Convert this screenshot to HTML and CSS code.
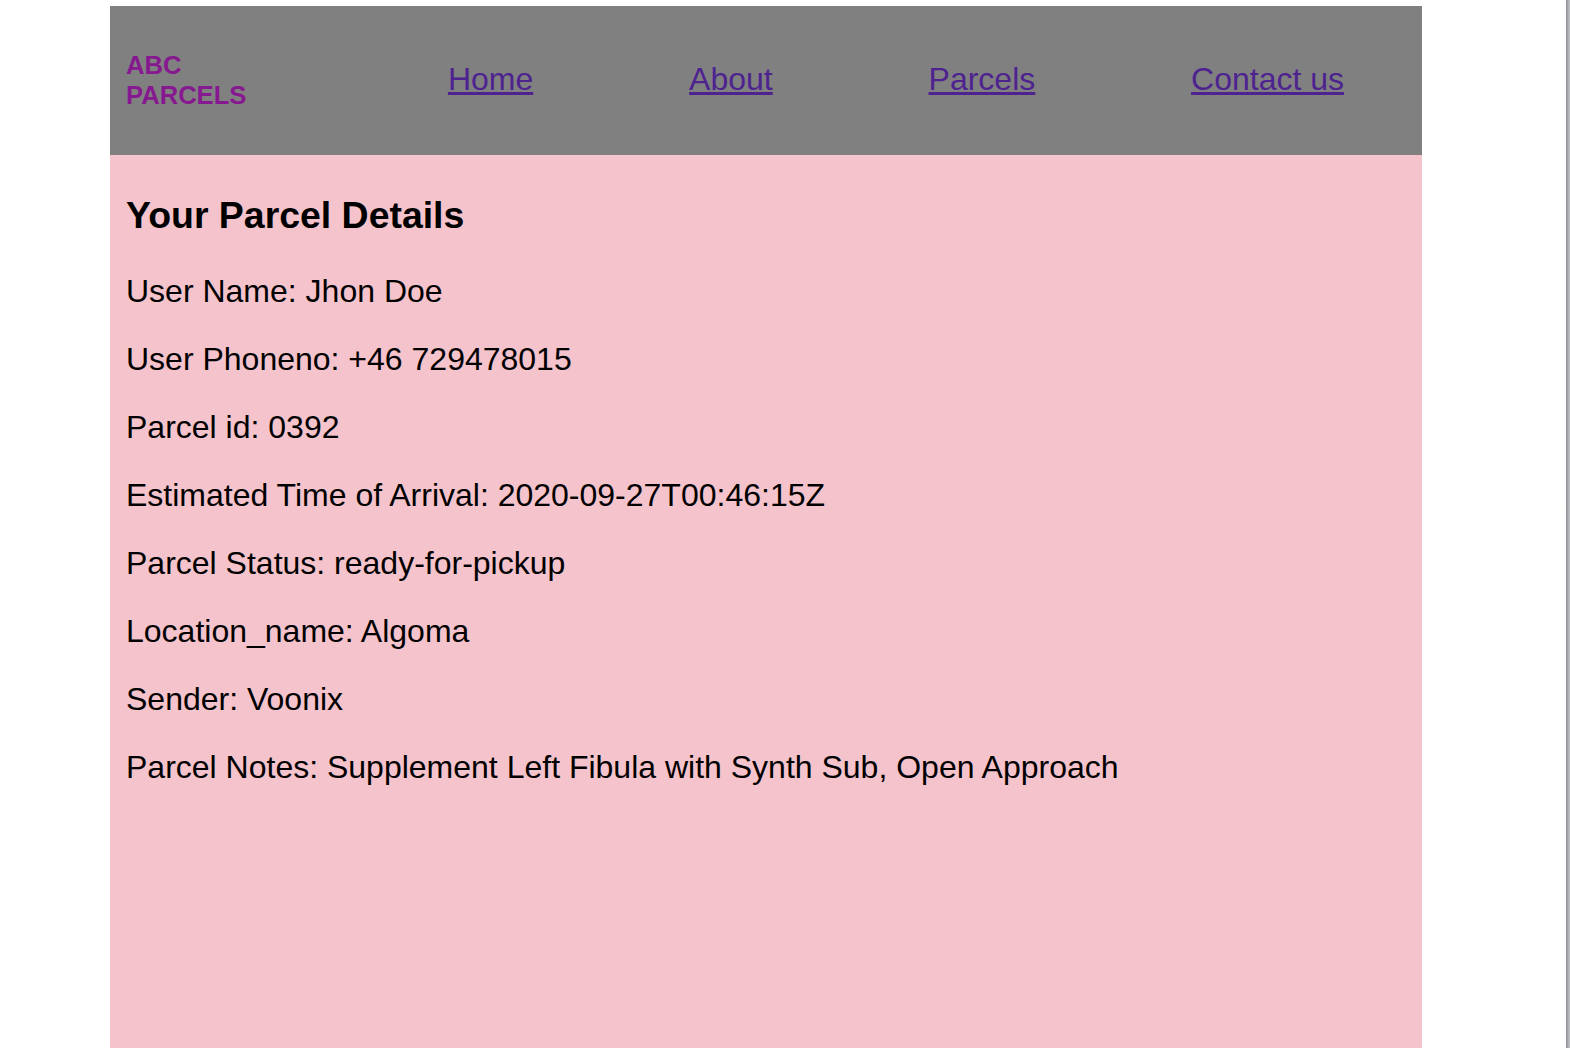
FILE: index.html
```html
<!DOCTYPE html>
<html lang="en">
<head>
<meta charset="utf-8">
<title>ABC Parcels</title>
<link rel="stylesheet" href="styles.css">
</head>
<body>
<div class="page">
  <header class="header">
    <div class="logo">ABC<br>PARCELS</div>
    <nav class="nav">
      <a href="#" class="nav-link">Home</a>
      <a href="#" class="nav-link">About</a>
      <a href="#" class="nav-link">Parcels</a>
      <a href="#" class="nav-link">Contact us</a>
    </nav>
  </header>
  <main class="main">
    <h3 class="title">Your Parcel Details</h3>
    <p class="row">User Name: Jhon Doe</p>
    <p class="row">User Phoneno: +46 729478015</p>
    <p class="row">Parcel id: 0392</p>
    <p class="row">Estimated Time of Arrival: 2020-09-27T00:46:15Z</p>
    <p class="row">Parcel Status: ready-for-pickup</p>
    <p class="row">Location_name: Algoma</p>
    <p class="row">Sender: Voonix</p>
    <p class="row">Parcel Notes: Supplement Left Fibula with Synth Sub, Open Approach</p>
  </main>
</div>
<div class="edge"></div>
</body>
</html>
```
FILE: styles.css
```css
html, body {
  margin: 0;
  padding: 0;
  background: #ffffff;
  overflow: hidden;
}
body {
  font-family: "Liberation Sans", Arial, Helvetica, sans-serif;
  font-size: 32px;
  color: #000000;
}
.page {
  width: 1312px;
  margin: 6px 0 0 110px;
}
.header {
  display: flex;
  align-items: center;
  height: 149px;
  background: #808080;
}
.logo {
  width: 244px;
  padding-left: 16px;
  font-size: 25.6px;
  font-weight: bold;
  line-height: 29.5px;
  color: #86198f;
}
.nav {
  flex: 1;
  display: flex;
  justify-content: space-around;
  align-items: center;
  padding-bottom: 2px;
}
.nav-link {
  font-size: 32px;
  color: #4e2390;
  text-decoration: underline;
}
.main {
  display: flow-root;
  background: #f5c3cb;
  padding: 0 16px;
  min-height: 900px;
}
.title {
  font-size: 37.44px;
  font-weight: bold;
  margin: 38.5px 0 36.4px;
}
.row {
  margin: 32px 0;
  line-height: 36px;
}
.edge {
  position: fixed;
  top: 0;
  right: 0;
  width: 4px;
  height: 100%;
  background: linear-gradient(to right, #8c8e93, #c6c7ca);
}
```
